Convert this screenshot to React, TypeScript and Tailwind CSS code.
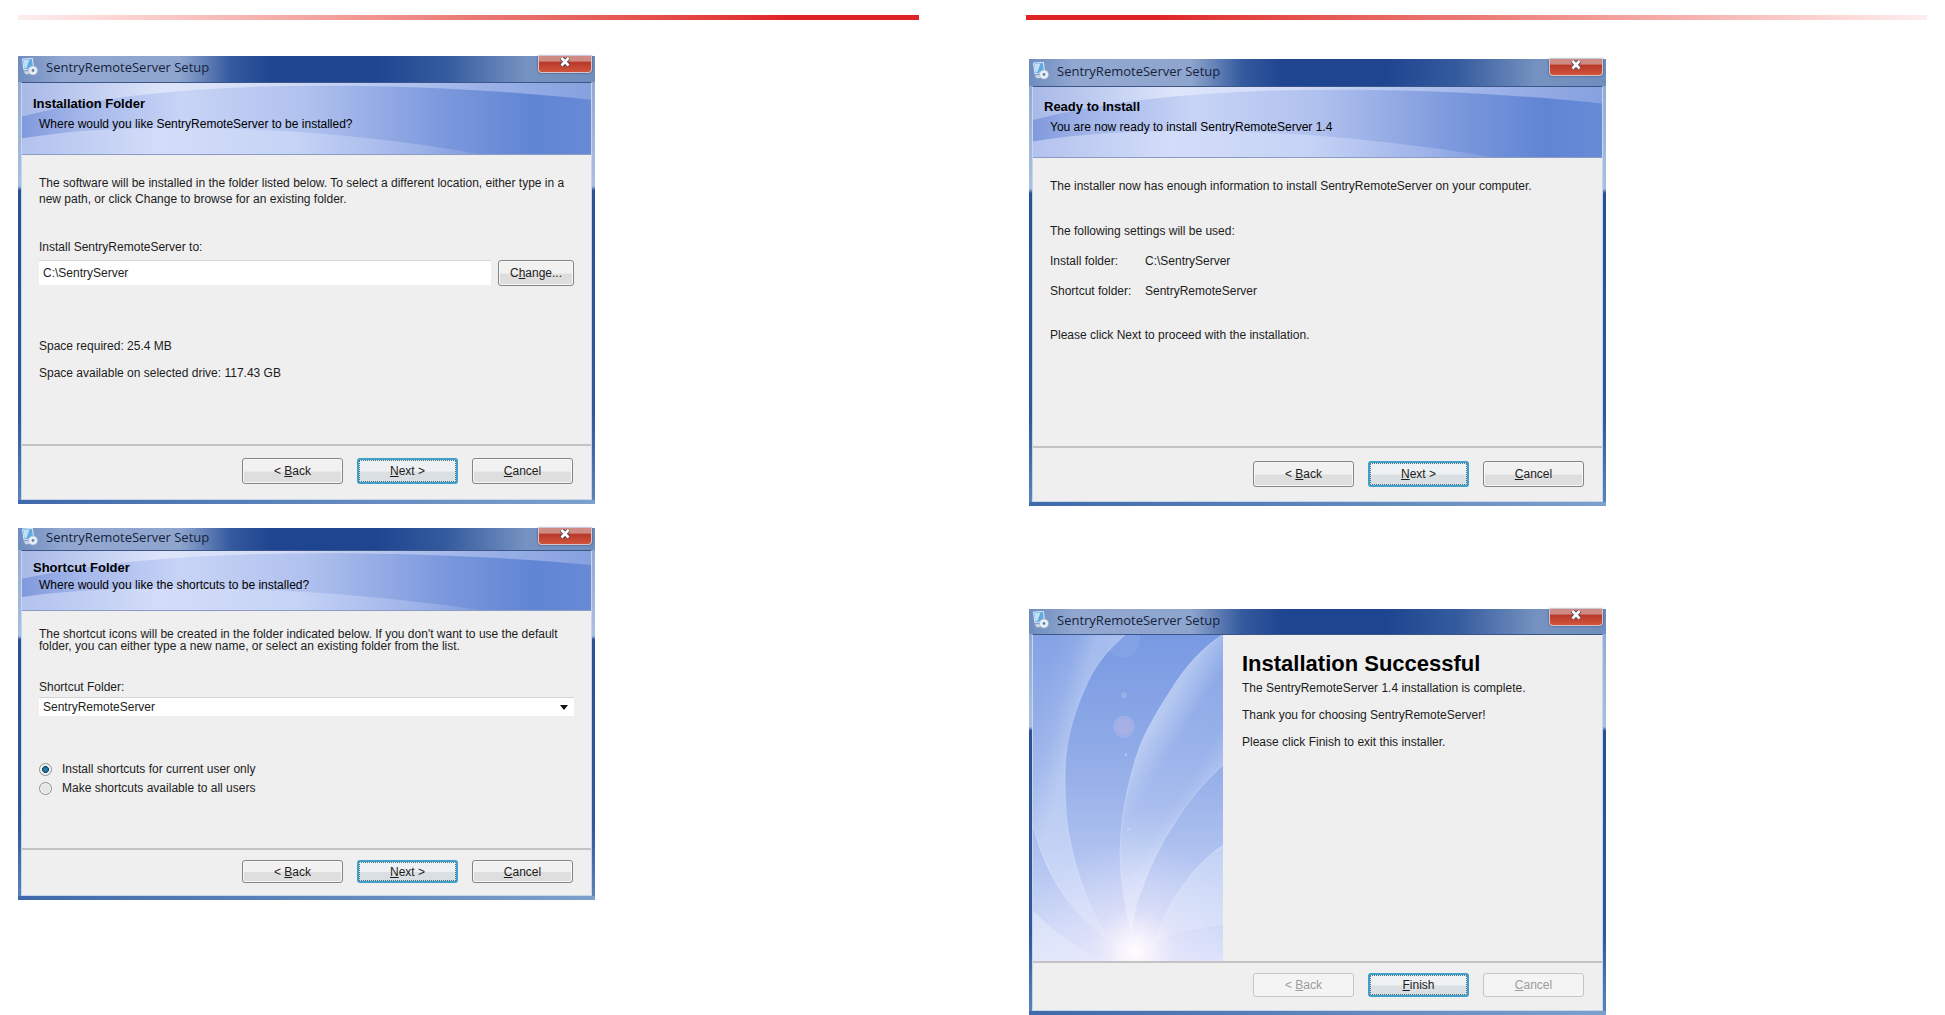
import { useState, type ReactNode } from "react";
import clsx from "clsx";

const APP_NAME = "SentryRemoteServer";

/* small installer icon: a screen with a disc in front */
function SetupIcon() {
  return (
    <svg viewBox="0 0 16 18" className="h-[18px] w-4 shrink-0" aria-hidden="true">
      <path d="M0.5 1 10.5 0.5 11.5 10 2 12z" fill="#5fa9e0" stroke="#dcebf8" strokeWidth="1" />
      <path d="M1.5 2 7.5 1.5 4.5 10 2.5 10.5z" fill="#bfe0f6" />
      <path d="M1.5 13.5 8 12.5 9 15.5 4 16.5z" fill="#c9d6e4" />
      <circle cx="11" cy="12.5" r="4.5" fill="#e9eff6" stroke="#a5b6cb" strokeWidth="0.7" />
      <circle cx="11" cy="12.5" r="1.4" fill="#5d83b0" />
    </svg>
  );
}

function Banner() {
  return (
    <svg
      viewBox="0 0 571 72"
      preserveAspectRatio="none"
      className="absolute inset-0 h-full w-full"
      aria-hidden="true"
    >
      <defs>
        <linearGradient id="top">
          <stop offset="0" stopColor="#a9b9e8" />
          <stop offset="0.25" stopColor="#dde5fa" />
          <stop offset="0.45" stopColor="#d3dcf7" />
          <stop offset="0.8" stopColor="#9db3e8" />
          <stop offset="1" stopColor="#86a1df" />
        </linearGradient>
        <linearGradient id="band">
          <stop offset="0" stopColor="#8099dc" />
          <stop offset="0.1" stopColor="#a3b6ea" />
          <stop offset="0.28" stopColor="#c8d4f6" />
          <stop offset="0.5" stopColor="#b0c1ee" />
          <stop offset="0.75" stopColor="#7a97dc" />
          <stop offset="0.9" stopColor="#6085d4" />
          <stop offset="1" stopColor="#678ad6" />
        </linearGradient>
        <linearGradient id="low">
          <stop offset="0" stopColor="#b3c2ee" />
          <stop offset="0.3" stopColor="#d3ddf9" />
          <stop offset="0.6" stopColor="#c6d3f5" />
          <stop offset="0.85" stopColor="#9fb4e9" />
          <stop offset="1" stopColor="#7f9bdd" />
        </linearGradient>
      </defs>
      <rect width="571" height="72" fill="url(#top)" />
      <path d="M0 34C60 18 130 8 230 4C350 0 470 6 571 17V72H0z" fill="url(#band)" />
      <path d="M0 56C60 46 130 44 200 46C290 48 380 58 460 72H0z" fill="url(#low)" />
    </svg>
  );
}

function FinishArt() {
  return (
    <svg
      viewBox="0 0 190 324"
      preserveAspectRatio="none"
      className="absolute inset-0 h-full w-full"
      aria-hidden="true"
    >
      <defs>
        <linearGradient id="sky" x2="0" y2="1">
          <stop offset="0" stopColor="#7899e2" />
          <stop offset="0.35" stopColor="#8faae7" />
          <stop offset="0.65" stopColor="#adc0ef" />
          <stop offset="1" stopColor="#dbe2fa" />
        </linearGradient>
        <linearGradient id="petalA" gradientUnits="userSpaceOnUse" x1="0" y1="90" x2="38" y2="100">
          <stop offset="0" stopColor="#dfeafc" stopOpacity="0.12" />
          <stop offset="0.5" stopColor="#dfeafc" stopOpacity="0.2" />
          <stop offset="1" stopColor="#e4edfd" stopOpacity="0.4" />
        </linearGradient>
        <linearGradient id="petalB" gradientUnits="userSpaceOnUse" x1="95" y1="130" x2="165" y2="175">
          <stop offset="0" stopColor="#e4edfd" stopOpacity="0.5" />
          <stop offset="0.35" stopColor="#dfeafc" stopOpacity="0.14" />
          <stop offset="0.7" stopColor="#dfeafc" stopOpacity="0.12" />
          <stop offset="1" stopColor="#e4edfd" stopOpacity="0.35" />
        </linearGradient>
        <linearGradient id="petalBFade" gradientUnits="userSpaceOnUse" x1="0" y1="170" x2="0" y2="298">
          <stop offset="0" stopColor="#e6eefd" stopOpacity="0" />
          <stop offset="1" stopColor="#eef2fe" stopOpacity="0.6" />
        </linearGradient>
        <radialGradient id="sun" gradientUnits="userSpaceOnUse" cx="102" cy="314" r="110">
          <stop offset="0" stopColor="#fffdff" />
          <stop offset="0.14" stopColor="#fbf6fd" stopOpacity="0.85" />
          <stop offset="0.4" stopColor="#ebe7fa" stopOpacity="0.45" />
          <stop offset="1" stopColor="#e4e6fb" stopOpacity="0" />
        </radialGradient>
      </defs>
      <rect width="190" height="324" fill="url(#sky)" />
      <path
        d="M92 0C72 16 60 34 52 53C36 88 32 115 32 139C32 165 33 185 37 203C44 240 58 275 76 303C60 292 42 275 29 256C15 235 6 213 0 189V0z"
        fill="url(#petalA)"
      />
      <path
        d="M189 0C168 14 152 32 139 53C126 73 114 92 106 113C94 147 88 180 87 216C87 245 92 272 99 298C100 283 103 268 109 253C117 229 128 207 142 186C155 165 171 146 190 129V0z"
        fill="url(#petalB)"
      />
      <path
        d="M189 0C168 14 152 32 139 53C126 73 114 92 106 113C94 147 88 180 87 216C87 245 92 272 99 298C100 283 103 268 109 253C117 229 128 207 142 186C155 165 171 146 190 129V0z"
        fill="url(#petalBFade)"
      />
      <path d="M121 306C128 284 138 264 152 246C163 231 175 219 190 209V288C165 291 142 296 121 306z" fill="#e4edfd" fillOpacity="0.4" />
      <path d="M0 274C20 294 42 310 70 324H0z" fill="#eef2fe" fillOpacity="0.4" />
      <g fill="none" stroke="#eaf1fe" strokeOpacity="0.3">
        <path d="M92 0C72 16 60 34 52 53C36 88 32 115 32 139C32 165 33 185 37 203C44 240 58 275 76 303" />
        <path d="M189 0C168 14 152 32 139 53C126 73 114 92 106 113C94 147 88 180 87 216C87 245 92 272 99 298" />
        <path d="M190 129C171 146 155 165 142 186C128 207 117 229 109 253" />
        <path d="M0 189C6 213 15 235 29 256C42 275 60 292 76 303" />
        <path d="M121 306C128 284 138 264 152 246C163 231 175 219 190 209" />
      </g>
      <circle cx="89" cy="4" r="18" fill="#b8cdf5" fillOpacity="0.15" />
      <circle cx="91" cy="60" r="3" fill="#c3d3f6" fillOpacity="0.3" />
      <circle cx="91" cy="91" r="11" fill="#c4bfe9" fillOpacity="0.35" />
      <circle cx="91" cy="91" r="8" fill="#b9b3e2" fillOpacity="0.3" />
      <circle cx="93" cy="119" r="1" fill="#dfe8fb" fillOpacity="0.7" />
      <circle cx="96" cy="193" r="1.5" fill="#dfe8fb" fillOpacity="0.4" />
      <rect width="190" height="324" fill="url(#sun)" />
    </svg>
  );
}

type PushButtonProps = {
  children: ReactNode;
  focused?: boolean;
  disabled?: boolean;
  className?: string;
};

function PushButton({ children, focused, disabled, className }: PushButtonProps) {
  return (
    <button
      type="button"
      disabled={disabled}
      className={clsx(
        "rounded-[3px] border text-center whitespace-nowrap",
        disabled && "border-[#c6c6c6] bg-[#f4f4f4] text-[#9c9c9c]",
        focused &&
          "border-2 border-[#3f9fc9] bg-linear-to-b from-[#eef1f3] from-50% to-[#d9dfe2] to-55% outline-1 -outline-offset-3 outline-dotted outline-[#4c6f80]",
        !disabled &&
          !focused &&
          "border-[#858585] bg-linear-to-b from-[#f1f1f1] from-50% to-[#dedede] to-55% shadow-[inset_0_0_0_1px_#f8f8f8]",
        className
      )}
    >
      {children}
    </button>
  );
}

type SetupWindowProps = {
  children: ReactNode;
  className: string;
  titleClass: string;
  footerClass: string;
  buttonClass: string;
  finished?: boolean;
};

function SetupWindow({ children, className, titleClass, footerClass, buttonClass, finished }: SetupWindowProps) {
  return (
    <section
      className={clsx(
        "flex w-full max-w-[577px] flex-col px-[3px] pb-1",
        "bg-[linear-gradient(to_right,#3f69aa,#7da0cc),linear-gradient(#8ea6d0,#a9c0e2_29%,#2a5096_30%,#2f589e_80%,#5c86bd)] bg-[length:100%_4px,100%_100%] bg-bottom bg-no-repeat",
        className
      )}
    >
      {/* Title bar */}
      <header
        className={clsx(
          "-mx-[3px] flex items-start bg-[linear-gradient(to_right,#6f8cbf,#92a8d0_8%,#8ea5ce_28%,#34599e_37%,#1f4590_44%,#1f4590_62%,#345a9e_74%,#7592c0_88%,#6f8ebd)] pl-1",
          titleClass
        )}
      >
        <div className="flex h-full items-center gap-2 pb-1">
          <SetupIcon />
          <h2 className="font-['Open_Sans',sans-serif] text-[13px] leading-4 whitespace-nowrap text-[#16233c]">
            {APP_NAME} Setup
          </h2>
        </div>
        <button
          type="button"
          aria-label="Close"
          className="mr-[3px] ml-auto flex h-[17px] w-[54px] items-center justify-center rounded-b-[4px] border border-t-0 border-[#d9c3c9] bg-linear-to-b from-[#cf8b83] from-30% via-[#b8392a] via-40% to-[#d1543b] pb-1 shadow-[0_0_2px_#2a3c66]"
        >
          <svg viewBox="0 0 14 10" className="h-2.5 w-3.5" aria-hidden="true">
            <path d="M3.5 1 10.5 8.5M10.5 1 3.5 8.5" stroke="#5d4350" strokeWidth="4.6" />
            <path d="M3.5 1 10.5 8.5M10.5 1 3.5 8.5" stroke="#fff" strokeWidth="2.6" />
          </svg>
        </button>
      </header>

      <div className="flex flex-1 flex-col border border-[#c8d6ea] border-t-[#3c5688] bg-[#efefef]">
        {children}
        <footer className={clsx("flex justify-end gap-3.5 border-t-2 border-[#c3c3c3] pr-[18px]", footerClass)}>
          <PushButton className={buttonClass} disabled={finished}>
            &lt; <u>B</u>ack
          </PushButton>
          <PushButton className={buttonClass} focused>
            {finished ? (
              <>
                <u>F</u>inish
              </>
            ) : (
              <>
                <u>N</u>ext &gt;
              </>
            )}
          </PushButton>
          <PushButton className={buttonClass} disabled={finished}>
            <u>C</u>ancel
          </PushButton>
        </footer>
      </div>
    </section>
  );
}

type StepHeaderProps = { title: string; text: string; className: string; textClass: string };

function StepHeader({ title, text, className, textClass }: StepHeaderProps) {
  return (
    <div className={clsx("relative border-b border-[#8b9cc4]", className)}>
      <Banner />
      <div className="relative pl-[11px] text-black">
        <h3 className="text-[13px] leading-4 font-bold">{title}</h3>
        <p className={clsx("pl-1.5", textClass)}>{text}</p>
      </div>
    </div>
  );
}

export default function App() {
  const [scope, setScope] = useState("current");

  const radioClass =
    "size-[13px] appearance-none rounded-full border border-[#8e8f8f] bg-[#e6e6e6] shadow-[inset_0_0_0_1px_#f6f6f6] checked:bg-radial checked:from-[#2b7fae] checked:from-20% checked:via-[#14425f] checked:via-40% checked:to-[#eef2f4] checked:to-48%";

  return (
    <main className="grid grid-cols-2 gap-[107px] bg-white px-[18px] pt-[15px] font-['Liberation_Sans',Arial,sans-serif] text-[12px] leading-4 text-[#1c1c1c]">
      <div>
        <div className="h-[5px] bg-linear-to-r from-[#fdeeee] via-[#ea7a77] via-50% to-[#df2426] to-85%" />

        {/* Installation folder */}
        <SetupWindow
          className="mt-9 min-h-[448px]"
          titleClass="h-[26px]"
          footerClass="pt-3 pb-[15px]"
          buttonClass="h-[26px] w-[101px]"
        >
          <StepHeader
            className="h-[72px] pt-[13px]"
            textClass="leading-6"
            title="Installation Folder"
            text={`Where would you like ${APP_NAME} to be installed?`}
          />
          <div className="flex-1 px-[17px] pt-5">
            <p>
              The software will be installed in the folder listed below. To select a different location, either type in a{" "}
              <br className="hidden xl:block" />
              new path, or click Change to browse for an existing folder.
            </p>
            <label htmlFor="install-path" className="mt-8 block">
              Install {APP_NAME} to:
            </label>
            <div className="mt-[5px] flex gap-[7px]">
              <input
                id="install-path"
                type="text"
                defaultValue="C:\SentryServer"
                className="h-[25px] min-w-0 flex-1 border-t border-[#d5d5d5] bg-white px-1"
              />
              <PushButton className="h-[26px] w-[76px]">
                C<u>h</u>ange...
              </PushButton>
            </div>
            <p className="mt-[52px]">Space required: 25.4 MB</p>
            <p className="mt-[11px]">Space available on selected drive: 117.43 GB</p>
          </div>
        </SetupWindow>

        {/* Shortcut folder */}
        <SetupWindow
          className="mt-6 min-h-[372px]"
          titleClass="h-[22px]"
          footerClass="pt-2.5 pb-3"
          buttonClass="h-[23px] w-[101px]"
        >
          <StepHeader
            className="h-[60px] pt-[9px]"
            textClass="leading-[18px]"
            title="Shortcut Folder"
            text="Where would you like the shortcuts to be installed?"
          />
          <div className="flex-1 px-[17px] pt-[17px]">
            <p className="leading-3">
              The shortcut icons will be created in the folder indicated below. If you don't want to use the default{" "}
              <br className="hidden xl:block" />
              folder, you can either type a new name, or select an existing folder from the list.
            </p>
            <label htmlFor="shortcut-folder" className="mt-[27px] block">
              Shortcut Folder:
            </label>
            <div className="relative mt-0.5">
              <select
                id="shortcut-folder"
                className="block h-[19px] w-full appearance-none border-t border-[#d5d5d5] bg-white px-1"
              >
                <option>SentryRemoteServer</option>
              </select>
              <svg viewBox="0 0 8 5" className="pointer-events-none absolute top-2 right-1.5 h-[5px] w-2" aria-hidden="true">
                <path d="M0 0h8L4 5z" fill="#111" />
              </svg>
            </div>
            <fieldset className="mt-[45px] flex flex-col gap-[3px]">
              <label className="flex items-center gap-2.5">
                <input
                  type="radio"
                  name="scope"
                  className={radioClass}
                  checked={scope === "current"}
                  onChange={() => setScope("current")}
                />
                Install shortcuts for current user only
              </label>
              <label className="flex items-center gap-2.5">
                <input
                  type="radio"
                  name="scope"
                  className={radioClass}
                  checked={scope === "all"}
                  onChange={() => setScope("all")}
                />
                Make shortcuts available to all users
              </label>
            </fieldset>
          </div>
        </SetupWindow>
      </div>

      <div>
        <div className="h-[5px] bg-linear-to-r from-[#df2426] from-15% via-[#ea7a77] via-50% to-[#fdeeee]" />

        <div className="pl-[3px]">
          {/* Ready to install */}
          <SetupWindow
            className="mt-[39px] min-h-[447px]"
            titleClass="h-[27px]"
            footerClass="pt-[13px] pb-3.5"
            buttonClass="h-[26px] w-[101px]"
          >
            <StepHeader
              className="h-[71px] pt-3"
              textClass="leading-6"
              title="Ready to Install"
              text={`You are now ready to install ${APP_NAME} 1.4`}
            />
            <div className="flex-1 px-[17px] pt-5">
              <p>The installer now has enough information to install {APP_NAME} on your computer.</p>
              <p className="mt-[29px]">The following settings will be used:</p>
              <dl className="mt-3.5 grid grid-cols-[95px_1fr] gap-y-3.5">
                <dt>Install folder:</dt>
                <dd>C:\SentryServer</dd>
                <dt>Shortcut folder:</dt>
                <dd>{APP_NAME}</dd>
              </dl>
              <p className="mt-7">Please click Next to proceed with the installation.</p>
            </div>
          </SetupWindow>

          {/* Done */}
          <SetupWindow
            className="mt-[103px] min-h-[406px]"
            titleClass="h-[25px]"
            footerClass="pt-2.5 pb-[13px]"
            buttonClass="h-6 w-[101px]"
            finished
          >
            <div className="flex flex-1">
              <div className="relative w-[190px] shrink-0">
                <FinishArt />
              </div>
              <div className="pt-[15px] pl-[19px]">
                <h3 className="text-[22px] leading-7 font-bold text-black">Installation Successful</h3>
                <p className="mt-0.5">The {APP_NAME} 1.4 installation is complete.</p>
                <p className="mt-[11px]">Thank you for choosing {APP_NAME}!</p>
                <p className="mt-[11px]">Please click Finish to exit this installer.</p>
              </div>
            </div>
          </SetupWindow>
        </div>
      </div>
    </main>
  );
}
